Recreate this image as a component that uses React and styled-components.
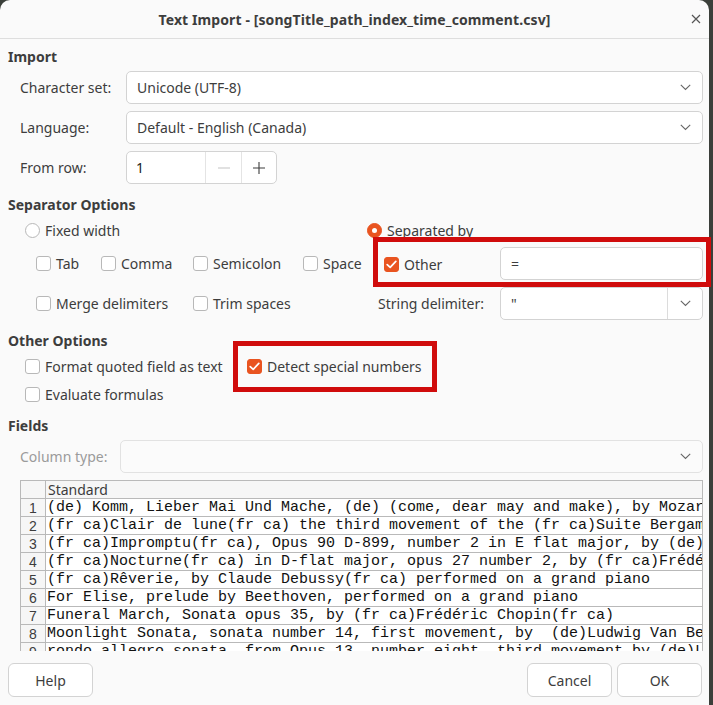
import React from "react";
import styled, { createGlobalStyle } from "styled-components";

const GlobalStyle = createGlobalStyle`
  html, body { margin: 0; padding: 0; }
  body {
    background: #3b3f3a;
    font-family: "Noto Sans", "DejaVu Sans", sans-serif;
    font-size: 14px;
    color: #3d3d3d;
    width: 713px;
    height: 705px;
    overflow: hidden;
  }
`;

const Dialog = styled.div`
  width: 709px;
  height: 705px;
  background: #fafafa;
  border-radius: 10px 10px 0 0;
  display: flex;
  flex-direction: column;
  box-sizing: border-box;
`;

const TitleBar = styled.div`
  height: 38px;
  flex: none;
  display: grid;
  grid-template-columns: 40px 1fr 40px;
  align-items: center;
  border-bottom: 1px solid #dedede;
`;

const Title = styled.div`
  grid-column: 2;
  text-align: center;
  font-weight: 700;
  font-size: 14px;
  letter-spacing: 0.1px;
  color: #3d3d3d;
`;

const CloseBtn = styled.div`
  display: flex;
  justify-content: flex-end;
  padding-right: 8px;
  color: #555;
`;

const Body = styled.div`
  flex: 1;
  display: flex;
  flex-direction: column;
  padding: 0 6px 0 8px;
`;

const Heading = styled.div`
  font-weight: 700;
  height: 20px;
  line-height: 20px;
  margin-top: ${(p) => p.$top}px;
`;

const FormGrid = styled.div`
  display: grid;
  grid-template-columns: ${(p) => p.$label}px 1fr;
  row-gap: 7px;
  padding-left: 12px;
  margin-top: 4px;
  align-items: center;
`;

const Label = styled.div`
  color: ${(p) => (p.$disabled ? "#9b9b9b" : "#3d3d3d")};
`;

const Field = styled.div`
  height: 33px;
  box-sizing: border-box;
  background: ${(p) => (p.$disabled ? "#fbfbfb" : "#fff")};
  border: 1px solid ${(p) => (p.$disabled ? "#e2e2e2" : "#d3d3d3")};
  border-radius: 5px;
  display: flex;
  align-items: center;
  position: relative;
  flex: ${(p) => (p.$grow ? 1 : "initial")};
`;

const FieldText = styled.div`
  flex: 1;
  padding-left: 10px;
  white-space: pre;
`;

const ChevronCell = styled.div`
  width: 34px;
  height: 100%;
  display: flex;
  align-items: center;
  justify-content: center;
  border-left: ${(p) => (p.$split ? "1px solid #dcdcdc" : "none")};
`;

const Spin = styled(Field)`
  width: 151px;
`;

const SpinInput = styled.div`
  width: 71px;
  padding-left: 9px;
  height: 100%;
  display: flex;
  align-items: center;
  color: #222;
`;

const SpinBtn = styled.div`
  width: 35px;
  height: 100%;
  display: flex;
  align-items: center;
  justify-content: center;
  border-left: 1px solid #e4e4e4;
  color: ${(p) => (p.$disabled ? "#c9c9c9" : "#3d3d3d")};
`;

const RadioRow = styled.div`
  display: grid;
  grid-template-columns: 342px 1fr;
  padding-left: 17px;
  margin-top: 5px;
  height: 20px;
  align-items: center;
`;

const Option = styled.label`
  display: inline-flex;
  align-items: center;
  gap: 5px;
  white-space: nowrap;
  position: relative;
  padding-left: ${(p) => p.$pad || 0}px;
`;

const Radio = styled.span`
  width: 15px;
  height: 15px;
  box-sizing: border-box;
  border-radius: 50%;
  flex: none;
  background: ${(p) => (p.$on ? "#e95420" : "#fff")};
  border: 1px solid ${(p) => (p.$on ? "#e95420" : "#b8b8b8")};
  display: flex;
  align-items: center;
  justify-content: center;
  &::after {
    content: "";
    width: 5px;
    height: 5px;
    border-radius: 50%;
    background: #fff;
    display: ${(p) => (p.$on ? "block" : "none")};
  }
`;

const Box = styled.span`
  width: 15px;
  height: 15px;
  box-sizing: border-box;
  border-radius: 3px;
  flex: none;
  background: ${(p) => (p.$on ? "#e95420" : "#fff")};
  border: 1px solid ${(p) => (p.$on ? "#e95420" : "#b8b8b8")};
  display: flex;
  align-items: center;
  justify-content: center;
`;

const SepGrid = styled.div`
  display: grid;
  grid-template-columns: 65px 92px 110px 75px 122px 1fr;
  grid-auto-rows: 33px;
  row-gap: 7px;
  padding-left: 28px;
  margin-top: 7px;
  align-items: center;
`;

const Wide = styled.div`
  grid-column: ${(p) => p.$col};
  position: relative;
  display: flex;
  align-items: center;
  height: 100%;
`;

const OtherCell = styled.div`
  width: 122px;
`;

const Mark = styled.div`
  position: absolute;
  border: 5px solid #d00c0c;
  box-sizing: border-box;
  pointer-events: none;
`;

const OtherGrid = styled.div`
  display: grid;
  grid-template-columns: 222px 1fr;
  grid-auto-rows: 20px;
  row-gap: 8px;
  padding-left: 17px;
  margin-top: 5px;
  align-items: center;
`;

const Table = styled.div`
  margin: 7px 0 0 12px;
  height: 170px;
  overflow: hidden;
  border: 1px solid #b9b9b9;
  border-bottom: none;
  background: #fff;
`;

const Row = styled.div`
  display: grid;
  grid-template-columns: 25px 1fr;
  height: 18px;
  border-bottom: 1px solid #b9b9b9;
  box-sizing: border-box;
  overflow: hidden;
`;

const NumCell = styled.div`
  background: #f6f6f6;
  border-right: 1px solid #b9b9b9;
  text-align: center;
  font-family: "Liberation Sans", Arial, sans-serif;
  font-size: 14px;
  line-height: 18px;
  overflow: hidden;
  color: #3d3d3d;
`;

const HeadCell = styled.div`
  background: #f6f6f6;
  padding-left: 2px;
  line-height: 17px;
  font-size: 14px;
`;

const DataCell = styled.div`
  font-family: "Liberation Mono", "DejaVu Sans Mono", monospace;
  font-size: 15px;
  line-height: 17px;
  color: #111;
  white-space: pre;
  overflow: hidden;
  padding-left: 1px;
`;

const Buttons = styled.div`
  display: flex;
  gap: 5px;
  margin-top: 12px;
  padding-right: 1px;
`;

const Button = styled.div`
  width: 85px;
  height: 34px;
  box-sizing: border-box;
  border: 1px solid #d3d3d3;
  border-radius: 6px;
  background: #fff;
  display: flex;
  align-items: center;
  justify-content: center;
  margin-left: ${(p) => (p.$push ? "auto" : 0)};
`;

const Chevron = () => (
  <svg width="11" height="7" viewBox="0 0 11 7">
    <polyline points="0.8,0.8 5.5,5.5 10.2,0.8" fill="none" stroke="#666" strokeWidth="1.1" />
  </svg>
);

const Check = () => (
  <svg width="11" height="9" viewBox="0 0 11 9">
    <polyline points="1.2,4.6 4.2,7.4 9.8,1.4" fill="none" stroke="#fff" strokeWidth="1.7" strokeLinecap="round" strokeLinejoin="round" />
  </svg>
);

const CheckOption = ({ on, children, pad }) => (
  <Option $pad={pad}>
    <Box $on={on}>{on && <Check />}</Box>
    {children}
  </Option>
);

const rows = [
  "(de) Komm, Lieber Mai Und Mache, (de) (come, dear may and make), by Mozart performed on a grand piano",
  "(fr ca)Clair de lune(fr ca) the third movement of the (fr ca)Suite Bergamasque(fr ca) by Claude Debussy",
  "(fr ca)Impromptu(fr ca), Opus 90 D-899, number 2 in E flat major, by (de)Franz Schubert(de)",
  "(fr ca)Nocturne(fr ca) in D-flat major, opus 27 number 2, by (fr ca)Frédéric Chopin(fr ca)",
  "(fr ca)Rêverie, by Claude Debussy(fr ca) performed on a grand piano",
  "For Elise, prelude by Beethoven, performed on a grand piano",
  "Funeral March, Sonata opus 35, by (fr ca)Frédéric Chopin(fr ca)",
  "Moonlight Sonata, sonata number 14, first movement, by  (de)Ludwig Van Beethoven(de)",
  "rondo allegro sonata, from Opus 13, number eight, third movement by (de)Ludwig Van Beethoven",
];

export default function App() {
  return (
    <>
      <GlobalStyle />
      <Dialog>
        <TitleBar>
          <Title>Text Import - [songTitle_path_index_time_comment.csv]</Title>
          <CloseBtn>
            <svg width="10" height="10" viewBox="0 0 10 10">
              <path d="M1 1L9 9M9 1L1 9" stroke="#555" strokeWidth="1.2" />
            </svg>
          </CloseBtn>
        </TitleBar>
        <Body>
          <Heading $top={8}>Import</Heading>
          <FormGrid $label={106}>
            <Label>Character set:</Label>
            <Field>
              <FieldText>Unicode (UTF-8)</FieldText>
              <ChevronCell><Chevron /></ChevronCell>
            </Field>
            <Label>Language:</Label>
            <Field>
              <FieldText>Default - English (Canada)</FieldText>
              <ChevronCell><Chevron /></ChevronCell>
            </Field>
            <Label>From row:</Label>
            <Spin>
              <SpinInput>1</SpinInput>
              <SpinBtn $disabled>
                <svg width="12" height="2" viewBox="0 0 12 2"><path d="M0 1H12" stroke="currentColor" strokeWidth="1.1" /></svg>
              </SpinBtn>
              <SpinBtn>
                <svg width="12" height="12" viewBox="0 0 12 12"><path d="M0 6H12M6 0V12" stroke="currentColor" strokeWidth="1.1" /></svg>
              </SpinBtn>
            </Spin>
          </FormGrid>

          <Heading $top={11}>Separator Options</Heading>
          <RadioRow>
            <Option><Radio />Fixed width</Option>
            <Option><Radio $on />Separated by</Option>
          </RadioRow>
          <SepGrid>
            <CheckOption>Tab</CheckOption>
            <CheckOption>Comma</CheckOption>
            <CheckOption>Semicolon</CheckOption>
            <CheckOption>Space</CheckOption>
            <Wide $col="5 / 7">
              <OtherCell>
                <CheckOption on pad={6}>Other</CheckOption>
              </OtherCell>
              <Field $grow>
                <FieldText>=</FieldText>
              </Field>
              <Mark style={{ top: -10, bottom: -7, left: -5, right: -8 }} />
            </Wide>
            <Wide $col="1 / 3"><CheckOption>Merge delimiters</CheckOption></Wide>
            <Wide $col="3 / 5"><CheckOption>Trim spaces</CheckOption></Wide>
            <Label>String delimiter:</Label>
            <Field>
              <FieldText>"</FieldText>
              <ChevronCell $split><Chevron /></ChevronCell>
            </Field>
          </SepGrid>

          <Heading $top={11}>Other Options</Heading>
          <OtherGrid>
            <CheckOption>Format quoted field as text</CheckOption>
            <Option>
              <Box $on><Check /></Box>
              Detect special numbers
              <Mark style={{ top: -16, left: -14, width: 204, height: 51 }} />
            </Option>
            <CheckOption>Evaluate formulas</CheckOption>
          </OtherGrid>

          <Heading $top={12}>Fields</Heading>
          <FormGrid $label={100}>
            <Label $disabled>Column type:</Label>
            <Field $disabled>
              <FieldText />
              <ChevronCell><Chevron /></ChevronCell>
            </Field>
          </FormGrid>

          <Table>
            <Row>
              <NumCell />
              <HeadCell>Standard</HeadCell>
            </Row>
            {rows.map((r, i) => (
              <Row key={i}>
                <NumCell>{i + 1}</NumCell>
                <DataCell>{r}</DataCell>
              </Row>
            ))}
          </Table>

          <Buttons>
            <Button>Help</Button>
            <Button $push>Cancel</Button>
            <Button>OK</Button>
          </Buttons>
        </Body>
      </Dialog>
    </>
  );
}
